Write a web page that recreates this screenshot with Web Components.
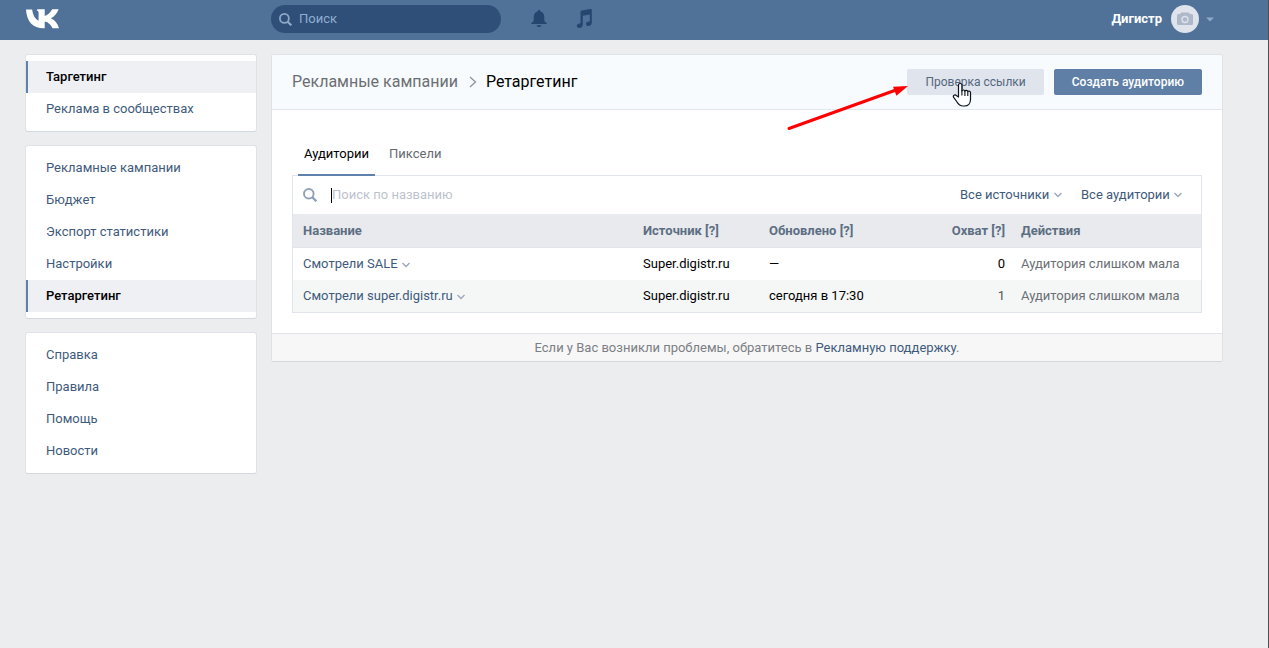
<!DOCTYPE html>
<html lang="ru">
<head>
<meta charset="utf-8">
<title>Ретаргетинг</title>
<style>
  html { background: #ebedef; }
  body { margin: 0; min-height: 100vh; box-sizing: border-box; border-right: 1px solid #4a4d52; font: 13px/16px Roboto, "Noto Sans", sans-serif; color: #000; }
</style>
</head>
<body>
<ads-app></ads-app>
<script>
const define = (name, html, init) => {
  const template = document.createElement('template');
  template.innerHTML = html;
  customElements.define(name, class extends HTMLElement {
    connectedCallback() {
      if (this.shadowRoot) return;
      this.attachShadow({ mode: 'open' }).append(template.content.cloneNode(true));
      if (init) init.call(this, this.shadowRoot);
    }
  });
};

define('ads-chevron', `
<style>:host{display:inline-flex;color:#9aa6b8} svg{display:block}</style>
<svg width="8" height="6" viewBox="0 0 8 6" fill="none" stroke="currentColor" stroke-width="1.3"><path d="M.5 1 4 4.5 7.5 1"/></svg>`);

define('ads-search-icon', `
<style>:host{display:block;flex:none} svg{display:block;width:100%;height:100%}</style>
<svg viewBox="0 0 14 14" fill="none" stroke="currentColor"><circle cx="5.8" cy="5.8" r="4.8" stroke-width="1.9"/><path d="m9.3 9.3 4 4" stroke-width="2.3"/></svg>`);

define('ads-topbar', `
<style>
:host{display:block;background:#507299}
header{display:flex;align-items:center;height:28px;padding:5px 54px 7px 25px}
.logo{width:246px;flex:none;display:block}
.logo svg{display:block;margin-left:1px}
.search{display:flex;align-items:center;gap:7px;width:230px;height:28px;box-sizing:border-box;padding:0 8px;border-radius:14px;background:#2f4f78;color:#8ea9c8}
.search ads-search-icon{width:13px;height:13px}
input{flex:1;min-width:0;padding:0;border:0;outline:0;background:none;font:inherit;color:#fff}
input::placeholder{color:#8fadd0;opacity:1}
button{border:0;padding:0;background:none;font:inherit;cursor:pointer}
.icon{color:#24466f}
.icon svg{display:block}
.bell{margin-left:30px}.music{margin-left:29px}
.user{margin-left:auto;display:flex;align-items:center;color:#fff;font-weight:700}
.avatar{margin:0 7px 0 9px;display:block}
</style>
<header>
  <a class="logo" href="#" aria-label="ВКонтакте"><svg width="33" height="20" viewBox="0 0 97 58"><path fill="#fff" d="M0 1H18C20 17 26 28 37 34V11C37 7 35 5 31 3L34 0H55V20C64 17 72 10 77 0H96C92 12 84 21 73 27 84 32 93 42 97 56H78C74 46 66 38 55 36V56H52C20 56 2 37 0 1Z"/></svg></a>
  <div class="search"><ads-search-icon></ads-search-icon><input type="search" aria-label="Поиск" placeholder="Поиск"></div>
  <button class="icon bell" aria-label="Уведомления"><svg width="16" height="18" viewBox="0 0 16 18" fill="currentColor"><path d="M8 0c.9 0 1.4.6 1.5 1.4C12 2.200 13.300 4.300 13.300 7v3.500c0 1.500 2.700 2 2.700 3.500H0c0-1.500 2.700-2 2.700-3.500V7C2.700 4.300 4 2.200 6.500 1.400 6.600.6 7.100 0 8 0ZM5.500 15.200h5C10.200 16.500 9.200 17 8 17s-2.200-.5-2.500-1.800Z"/></svg></button>
  <button class="icon music" aria-label="Музыка"><svg width="18" height="20" viewBox="0 0 18 20" fill="currentColor"><path d="M4.500 3C4.500 2.200 5 1.700 5.800 1.500L14.500 0c.8-.1 1.300.3 1.300 1v12.700c0 1.800-1.500 3.300-3.400 3.300-1.600 0-2.400-.8-2.400-2 0-1.500 1.200-2.400 2.700-2.600l1.100-.2V5.500l-7 1.300v8.900c0 2-1.500 3.300-3.400 3.300C1.700 19 .8 18.200.8 17c0-1.500 1.200-2.400 2.700-2.600l1-.2Z"/></svg></button>
  <button class="user">Дигистр
    <svg class="avatar" width="28" height="28" viewBox="0 0 28 28"><circle cx="14" cy="14" r="14" fill="#dee3ec"/><path fill="#adb8c8" d="M7.500 9H9l1.500-1.500h7L19 9h1.500A1.500 1.500 0 0 1 22 10.500v8a1.500 1.500 0 0 1-1.500 1.500h-13A1.500 1.500 0 0 1 6 18.500v-8A1.500 1.500 0 0 1 7.500 9Z"/><circle cx="14" cy="14.500" r="3" fill="none" stroke="#dee3ec" stroke-width="1.300"/></svg>
    <svg width="8" height="5" viewBox="0 0 8 5"><path fill="#8fa9c8" d="M0 .5h8L4 4.500Z"/></svg>
  </button>
</header>`);

define('ads-card', `
<style>:host{display:block;box-sizing:border-box;border:1px solid #dfe2e7;border-bottom-color:#d3d8de;border-radius:3px;background:#fff}</style><slot></slot>`);

define('ads-menu', `
<style>:host{display:block} nav{padding:6px 0;display:flex;flex-direction:column}</style>
<ads-card><nav><slot></slot></nav></ads-card>`);

define('ads-menu-item', `
<style>
:host{display:block}
a{display:block;padding:8px 18px;border-left:2px solid transparent;color:#3f5b7c;text-decoration:none}
:host([current]) a{background:#eef0f4;border-left-color:#5f82ac;color:#000;font-weight:500}
</style>
<a href="#"><slot></slot></a>`, function (root) {
  if (this.hasAttribute('current')) root.querySelector('a').setAttribute('aria-current', 'page');
});

define('ads-button', `
<style>
:host{display:block}
button{height:26px;padding:0 18px;border:0;border-radius:2px;background:#dfe4ed;color:#55677d;font:inherit;font-size:12px;cursor:pointer}
:host([primary]) button{background:#5f7fa6;color:#fff;font-weight:500}
</style>
<button type="button"><slot></slot></button>`);

define('ads-pointer', `
<style>
:host{position:absolute;left:-120px;top:13px;display:block;pointer-events:none}
svg{display:block}
</style>
<svg width="186" height="50" viewBox="0 0 186 50">
  <path d="M2 46.500 109 8" stroke="#f00" stroke-width="3" stroke-linecap="round"/>
  <path d="m121 4-15 .7 3.400 9Z" fill="#f00"/>
  <path d="M171.500 15V3c0-2 3.400-2 3.400 0v6c0-1.500 3-1.300 3 .3 0-1.300 2.900-1.200 2.900.5 0-1.200 2.700-1 2.700.8v6.900c0 4-2.500 6.500-6 6.500H176c-3 0-4.500-1.500-6-4l-3.500-4.800c-1-1.700 1.500-3 2.800-1.700Z" fill="#fff" stroke="#0b1220" stroke-width="1.200" stroke-linejoin="round"/>
  <path d="M174.900 8v5.500m3-4.500v5m2.900-4v4" stroke="#0b1220" stroke-width="1.100"/>
</svg>`);

define('ads-page-head', `
<style>
:host{display:flex;align-items:center;height:54px;padding:0 20px;border-bottom:1px solid #e3e6ec;background:#f8fbfd;border-radius:2px 2px 0 0}
nav{display:flex;align-items:center;font-size:16px;line-height:20px}
a{color:#6b6f75;text-decoration:none}
svg{margin:0 9px 0 11px}
.actions{margin-left:auto;display:flex;gap:10px}
.check{position:relative}
</style>
<nav aria-label="Путь"><a href="#">Рекламные кампании</a><svg width="8" height="12" viewBox="0 0 8 12" fill="none" stroke="#8d949e" stroke-width="1.300"><path d="m1 1 5.500 5L1 11"/></svg><span aria-current="page">Ретаргетинг</span></nav>
<div class="actions">
  <div class="check"><ads-button>Проверка ссылки</ads-button><ads-pointer></ads-pointer></div>
  <ads-button primary>Создать аудиторию</ads-button>
</div>`);

define('ads-tabs', `
<style>
:host{display:flex;gap:8px;padding:0 6px}
a{padding:16px 6px 12px;border-bottom:2px solid transparent;color:#656a71;text-decoration:none}
a[aria-current]{border-bottom-color:#5f82ac;color:#000}
</style>
<a href="#" aria-current="page">Аудитории</a><a href="#">Пиксели</a>`);

define('ads-filter', `
<style>
:host{display:flex;align-items:center;gap:4px}
select{appearance:none;border:0;padding:0;margin:0;background:none;font:inherit;color:#3f5b7c;cursor:pointer}
</style>
<select><option></option></select><ads-chevron></ads-chevron>`, function (root) {
  const label = this.getAttribute('label');
  root.querySelector('select').setAttribute('aria-label', label);
  root.querySelector('option').textContent = label;
});

define('ads-audiences', `
<style>
:host{display:block;border:1px solid #e1e4ea;margin-top:-1px}
.tools{display:flex;align-items:center;gap:19px;height:38px;padding:0 19px 0 10px}
.tools ads-search-icon{width:14px;height:14px;color:#8fa0ba}
.field{flex:1;display:flex;align-items:center}
.caret{width:1px;height:15px;background:#000}
input{flex:1;min-width:0;padding:0;border:0;outline:0;background:none;font:inherit}
.tools ads-search-icon{margin-right:-5px}
input::placeholder{color:#bcc3ce;opacity:1}
table{width:100%;border-collapse:collapse;table-layout:fixed}
th,td{padding:8px;text-align:left;font-weight:400;white-space:nowrap}
th:first-child{padding-left:10px}
th:nth-child(4),td:nth-child(4){text-align:right}
thead th{background:#e8eaee;color:#5d6e82;font-weight:700;border-bottom:1px solid #e1e4ea;padding-top:9px}
tbody tr:nth-child(even){background:#f5f7f7}
td:last-child{color:#6b6f75}
.c1{width:342px}.c4{width:126px}.c2{width:126px}.c5{width:188px}
a{color:#3f5b7c;text-decoration:none}
button{border:0;padding:0 0 0 4px;background:none;cursor:pointer;font:inherit}
.n{color:#555}
</style>
<div class="tools">
  <ads-search-icon></ads-search-icon>
  <div class="field"><span class="caret"></span><input type="search" aria-label="Поиск по названию" placeholder="Поиск по названию"></div>
  <ads-filter label="Все источники"></ads-filter><ads-filter label="Все аудитории"></ads-filter>
</div>
<table>
  <colgroup><col class="c1"><col class="c2"><col><col class="c4"><col class="c5"></colgroup>
  <thead><tr><th>Название</th><th>Источник [?]</th><th>Обновлено [?]</th><th>Охват [?]</th><th>Действия</th></tr></thead>
  <tbody>
    <tr><th scope="row"><a href="#">Смотрели SALE</a><button aria-label="Меню"><ads-chevron></ads-chevron></button></th><td>Super.digistr.ru</td><td>—</td><td>0</td><td>Аудитория слишком мала</td></tr>
    <tr><th scope="row"><a href="#">Смотрели super.digistr.ru</a><button aria-label="Меню"><ads-chevron></ads-chevron></button></th><td>Super.digistr.ru</td><td>сегодня в 17:30</td><td class="n">1</td><td>Аудитория слишком мала</td></tr>
  </tbody>
</table>`);

define('ads-support', `
<style>
:host{display:block;padding:6px 0 5px;border-top:1px solid #dfe2e7;background:#f7f7f7;color:#7b7f85;text-align:center;border-radius:0 0 2px 2px}
a{color:#3f5b7c;text-decoration:none}
</style>
Если у Вас возникли проблемы, обратитесь в <a href="#">Рекламную поддержку</a>.`);

define('ads-app', `
<style>
:host{display:block}
.page{display:flex;align-items:flex-start;gap:14px;padding:14px 45px 14px 25px}
aside{width:232px;flex:none;display:flex;flex-direction:column;gap:13px}
main{flex:1;min-width:0}
.body{padding:20px}
</style>
<ads-topbar></ads-topbar>
<div class="page">
  <aside>
    <ads-menu><ads-menu-item current>Таргетинг</ads-menu-item><ads-menu-item>Реклама в сообществах</ads-menu-item></ads-menu>
    <ads-menu><ads-menu-item>Рекламные кампании</ads-menu-item><ads-menu-item>Бюджет</ads-menu-item><ads-menu-item>Экспорт статистики</ads-menu-item><ads-menu-item>Настройки</ads-menu-item><ads-menu-item current>Ретаргетинг</ads-menu-item></ads-menu>
    <ads-menu><ads-menu-item>Справка</ads-menu-item><ads-menu-item>Правила</ads-menu-item><ads-menu-item>Помощь</ads-menu-item><ads-menu-item>Новости</ads-menu-item></ads-menu>
  </aside>
  <main><ads-card>
    <ads-page-head></ads-page-head>
    <div class="body"><ads-tabs></ads-tabs><ads-audiences></ads-audiences></div>
    <ads-support></ads-support>
  </ads-card></main>
</div>`);
</script>
</body>
</html>
